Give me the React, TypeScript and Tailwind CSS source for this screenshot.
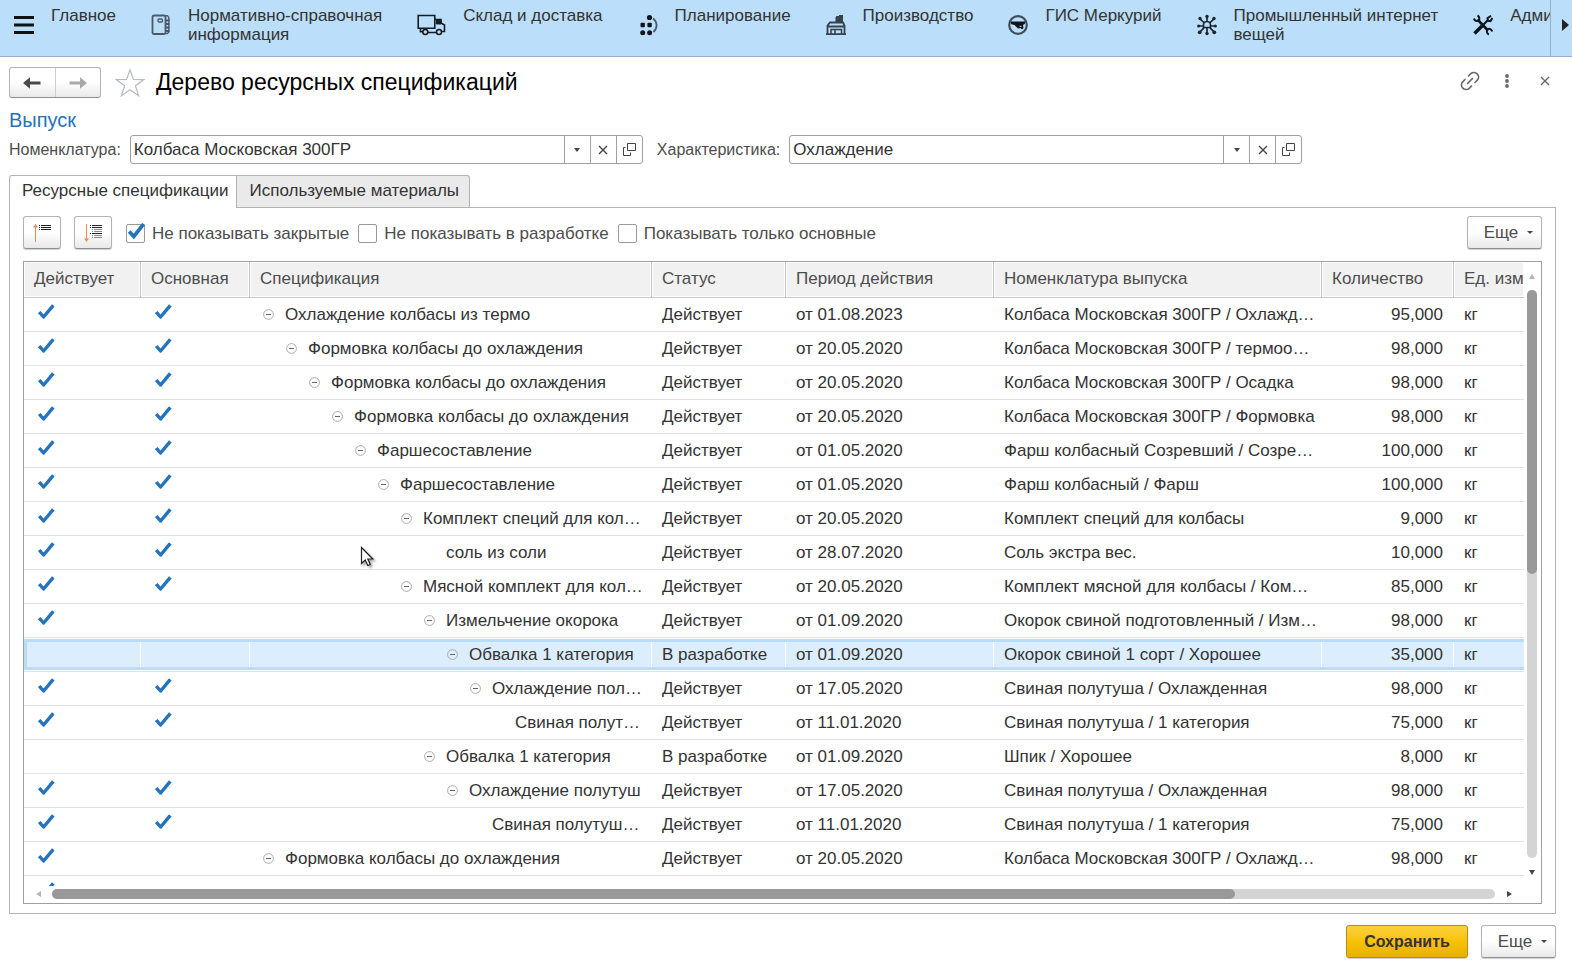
import React, { useState } from "react";

type Row = {
  active: boolean;
  main: boolean;
  level: number;
  leaf?: boolean;
  name: string;
  status: string;
  period: string;
  item: string;
  qty: string;
};

const D = "Действует";
const R = "В разработке";

const rows: Row[] = [
  { active: true, main: true, level: 0, name: "Охлаждение колбасы из термо", status: D, period: "от 01.08.2023", item: "Колбаса Московская 300ГР / Охлажд…", qty: "95,000" },
  { active: true, main: true, level: 1, name: "Формовка колбасы до охлаждения", status: D, period: "от 20.05.2020", item: "Колбаса Московская 300ГР / термоо…", qty: "98,000" },
  { active: true, main: true, level: 2, name: "Формовка колбасы до охлаждения", status: D, period: "от 20.05.2020", item: "Колбаса Московская 300ГР / Осадка", qty: "98,000" },
  { active: true, main: true, level: 3, name: "Формовка колбасы до охлаждения", status: D, period: "от 20.05.2020", item: "Колбаса Московская 300ГР / Формовка", qty: "98,000" },
  { active: true, main: true, level: 4, name: "Фаршесоставление", status: D, period: "от 01.05.2020", item: "Фарш колбасный Созревший / Созре…", qty: "100,000" },
  { active: true, main: true, level: 5, name: "Фаршесоставление", status: D, period: "от 01.05.2020", item: "Фарш колбасный / Фарш", qty: "100,000" },
  { active: true, main: true, level: 6, name: "Комплект специй для кол…", status: D, period: "от 20.05.2020", item: "Комплект специй для колбасы", qty: "9,000" },
  { active: true, main: true, level: 7, leaf: true, name: "соль из соли", status: D, period: "от 28.07.2020", item: "Соль экстра вес.", qty: "10,000" },
  { active: true, main: true, level: 6, name: "Мясной комплект для кол…", status: D, period: "от 20.05.2020", item: "Комплект мясной для колбасы / Ком…", qty: "85,000" },
  { active: true, main: false, level: 7, name: "Измельчение окорока", status: D, period: "от 01.09.2020", item: "Окорок свиной подготовленный / Изм…", qty: "98,000" },
  { active: false, main: false, level: 8, name: "Обвалка 1 категория", status: R, period: "от 01.09.2020", item: "Окорок свиной 1 сорт / Хорошее", qty: "35,000" },
  { active: true, main: true, level: 9, name: "Охлаждение пол…", status: D, period: "от 17.05.2020", item: "Свиная полутуша / Охлажденная", qty: "98,000" },
  { active: true, main: true, level: 10, leaf: true, name: "Свиная полут…", status: D, period: "от 11.01.2020", item: "Свиная полутуша / 1 категория", qty: "75,000" },
  { active: false, main: false, level: 7, name: "Обвалка 1 категория", status: R, period: "от 01.09.2020", item: "Шпик / Хорошее", qty: "8,000" },
  { active: true, main: true, level: 8, name: "Охлаждение полутуш", status: D, period: "от 17.05.2020", item: "Свиная полутуша / Охлажденная", qty: "98,000" },
  { active: true, main: true, level: 9, leaf: true, name: "Свиная полутуш…", status: D, period: "от 11.01.2020", item: "Свиная полутуша / 1 категория", qty: "75,000" },
  { active: true, main: false, level: 0, name: "Формовка колбасы до охлаждения", status: D, period: "от 20.05.2020", item: "Колбаса Московская 300ГР / Охлажд…", qty: "98,000" },
  { active: true, main: false, level: 0, leaf: true, name: "", status: "", period: "", item: "", qty: "" },
];

const columns = ["Действует", "Основная", "Спецификация", "Статус", "Период действия", "Номенклатура выпуска", "Количество", "Ед. изм"];

const MenuIcon = () => (
  <svg width="20" height="20" viewBox="0 0 20 20" fill="#111">
    <path d="M0 1h20v3H0zM0 8.500h20v3H0zM0 16h20v3H0z" />
  </svg>
);
const BookIcon = () => (
  <svg width="20" height="22" viewBox="0 0 20 22" fill="none" stroke="#4b5a69" strokeWidth="1.800">
    <rect x="1.500" y="1.500" width="13" height="18.500" rx="1.500" />
    <rect x="7" y="5" width="4.500" height="3" rx="1" strokeWidth="1.300" />
    <path d="M14.500 1.800h1.800l1.500 1.500v15l-1.500 1.300h-1.800" strokeWidth="1.400" />
    <path d="M15 6.500h3.500M15 10h3.500M15 13.500h3.500M15 17h3.500" strokeWidth="1.800" />
  </svg>
);
const TruckIcon = () => (
  <svg width="29" height="22" viewBox="0 0 29 22" fill="none" stroke="#161c22" strokeWidth="1.600">
    <path d="M1.200 1.500h16.600v12.700H1.200zM3.500 14.500v3.200h2M11 18.500h8M18 5.500h6v3.500l3.500 2v6.500H25" />
    <path d="M19.500 6h4.500v4h-4.500z" fill="#161c22" strokeWidth="1" />
    <circle cx="8.300" cy="18" r="2.500" />
    <circle cx="22" cy="18" r="2.500" />
  </svg>
);
const PlanIcon = () => (
  <svg width="20" height="22" viewBox="0 0 20 22" fill="#10161c">
    <circle cx="11.500" cy="3.500" r="2.600" />
    <rect x="2.500" y="8.800" width="4.400" height="4.400" rx="1" />
    <rect x="9.400" y="8.800" width="4.400" height="4.400" rx="1" />
    <circle cx="4.700" cy="18.700" r="2.500" />
    <circle cx="11.600" cy="18.700" r="2.500" />
    <path d="M15 4.500c4.600 3.500 4.800 9.500.5 13.500" fill="none" stroke="#4d5c6c" strokeWidth="1.800" />
  </svg>
);
const FactoryIcon = () => (
  <svg width="20" height="22" viewBox="0 0 20 22" fill="none" stroke="#36424e" strokeWidth="1.800">
    <path d="M1.500 20V11.500l2.500-3h13l1.500 3V20M1.500 12.500h17M0 20.200h20" />
    <path d="M9.500 9V3.500l1-1.500h2.500V1h4v8z" fill="#36424e" stroke="none" />
    <path d="M5 20v-4.500h4V20M9 15.500h6.500V20" strokeWidth="1.500" />
  </svg>
);
const MercuryIcon = () => (
  <svg width="20" height="22" viewBox="0 0 20 22" fill="none">
    <circle cx="10" cy="11" r="8.800" stroke="#3f4d5b" strokeWidth="2.200" />
    <path d="M2.500 7.500h15l-.8 2.500-1.700 1 .5 3-1.500 1.500-1.500-1.500-2.500.5L6.500 11l-3.300-.8z" fill="#0f151b" />
    <path d="M11.500 12.300l2 .2" stroke="#bbdefa" />
  </svg>
);
const IotIcon = () => (
  <svg width="20" height="22" viewBox="0 0 20 22" fill="none" stroke="#1d262f" strokeWidth="1.700">
    <path d="M6.500 13.500v-2.500a3.500 3.500 0 0 1 7 0v2.500zM10 7.500V3M6.800 8.500L3 4.800M13.200 8.500L17 4.800M6.500 12H2M13.500 12H18M7 13.800l-4 4M13 13.800l4 4M10 14v5" />
    <g fill="#1d262f" stroke="none">
      <circle cx="10" cy="2.500" r="1.700" /><circle cx="3" cy="4.500" r="1.700" /><circle cx="17" cy="4.500" r="1.700" />
      <circle cx="1.600" cy="12" r="1.500" /><circle cx="18.400" cy="12" r="1.500" />
      <circle cx="2.700" cy="18.300" r="1.900" /><circle cx="17.300" cy="18.300" r="1.900" /><circle cx="10" cy="19.500" r="1.700" />
    </g>
  </svg>
);
const ToolsIcon = () => (
  <svg width="20" height="22" viewBox="0 0 20 22" fill="none" stroke="#10161c">
    <path d="M1.500 19.500L9 12" strokeWidth="3.600" />
    <path d="M9 12l5.500-5.500" strokeWidth="2.200" />
    <path d="M4.500 5.500l10.500 11" strokeWidth="2.600" />
    <path d="M18 1.800l-3.500 2.500.5 2.500 2.500.3L19.500 4" strokeWidth="2" />
    <path d="M1 4.500C1.500 7 4 7.500 5.500 6.500S6.500 2.500 4.500 1.500" strokeWidth="2" />
    <path d="M19.200 17.500c-.5-2.300-3.200-3.300-4.500-2.100s-1 4.200 1.200 5.100" strokeWidth="2" />
  </svg>
);

const nav = [
  { label: ["Главное"], icon: <MenuIcon /> },
  { label: ["Нормативно-справочная", "информация"], icon: <BookIcon /> },
  { label: ["Склад и доставка"], icon: <TruckIcon /> },
  { label: ["Планирование"], icon: <PlanIcon /> },
  { label: ["Производство"], icon: <FactoryIcon /> },
  { label: ["ГИС Меркурий"], icon: <MercuryIcon /> },
  { label: ["Промышленный интернет", "вещей"], icon: <IotIcon /> },
  { label: ["Адми"], icon: <ToolsIcon /> },
];

const Tick = () => (
  <svg width="17" height="16" viewBox="0 0 17 16" fill="none" stroke="#2573bd" strokeWidth="3.400">
    <path d="M1.200 8l4.400 5L15.300 1.300" strokeLinejoin="round" />
  </svg>
);

const Cross = ({ color = "#444" }: { color?: string }) => (
  <svg width="10" height="10" viewBox="0 0 10 10" stroke={color} strokeWidth="1.400">
    <path d="M1 1l8 8M9 1L1 9" />
  </svg>
);

const Caret = () => (
  <svg width="6" height="4" viewBox="0 0 6 4" fill="#444">
    <path d="M0 0h6L3 4z" />
  </svg>
);

const softButton =
  "flex items-center justify-center rounded-[3px] border border-[#b3b3b3] border-b-[#8f8f8f] bg-linear-to-b from-white from-50% to-[#e9e9e9] shadow-[0_1px_1px_#cfcfcf]";

function Field({ id, label, value }: { id: string; label: string; value: string }) {
  const [text, setText] = useState(value);
  return (
    <div className="flex items-center gap-[9px]">
      <label htmlFor={id} className="text-[16px] whitespace-nowrap text-[#4d4d4d]">{label}</label>
      <div className="flex h-[29px] w-[513px] rounded-[3px] border border-[#a0a0a0] bg-white">
        <input
          id={id}
          value={text}
          onChange={(e) => setText(e.target.value)}
          className="min-w-0 flex-1 bg-transparent px-[3px] text-[#333] outline-none"
        />
        <button aria-label="Выбрать из списка" className="flex w-[26px] items-center justify-center border-l border-[#a0a0a0]"><Caret /></button>
        <button aria-label="Очистить" onClick={() => setText("")} className="flex w-[26px] items-center justify-center border-l border-[#a0a0a0]"><Cross /></button>
        <button aria-label="Открыть" className="flex w-[26px] items-center justify-center border-l border-[#a0a0a0]">
          <svg width="13" height="13" viewBox="0 0 13 13" fill="none" stroke="#444" strokeWidth="1">
            <path d="M4.500.5h8v7h-8zM2.500 4.500h-2v8h7v-3" />
          </svg>
        </button>
      </div>
    </div>
  );
}

function Check({ id, label, initial }: { id: string; label: string; initial: boolean }) {
  const [on, setOn] = useState(initial);
  return (
    <label htmlFor={id} className="flex items-center gap-[7px] whitespace-nowrap text-[#4d4d4d]">
      <span className="relative flex">
        <input
          id={id}
          type="checkbox"
          checked={on}
          onChange={() => setOn(!on)}
          className="size-[19px] appearance-none rounded-[2px] border border-[#999] bg-white"
        />
        {on && (
          <svg className="pointer-events-none absolute -top-px left-[2px]" width="17" height="16" viewBox="0 0 17 16" fill="none" stroke="#2573bd" strokeWidth="3.700">
            <path d="M1.200 8.500l4.600 5L15.700 1" />
          </svg>
        )}
      </span>
      {label}
    </label>
  );
}

function MoreButton() {
  return (
    <button className={`${softButton} h-[33px] w-[75px] gap-[9px] pl-2 text-[#4d4d4d]`}>
      Еще
      <svg width="6" height="3" viewBox="0 0 6 3" fill="#444"><path d="M0 0h6L3 3z" /></svg>
    </button>
  );
}

const cellBase = "flex items-center overflow-hidden whitespace-nowrap";

function Cell({ selected, first, last, className = "", children }: { selected: boolean; first?: boolean; last?: boolean; className?: string; children?: React.ReactNode }) {
  return (
    <td className="border-b border-[#e2e2e2] p-0">
      {selected ? (
        <div className={`my-px h-[31px] border-y-3 border-[#b9dcf9] bg-[#dceefd] ${first ? "border-l-3" : ""}`}>
          <div className={`${cellBase} h-[25px] pr-[10px] ${first ? "pl-[7px]" : "pl-[10px]"} ${last ? "" : "border-r border-white"} ${className}`}>{children}</div>
        </div>
      ) : (
        <div className={`${cellBase} h-[33px] pr-[11px] pl-[10px] ${className}`}>{children}</div>
      )}
    </td>
  );
}

export default function App() {
  const [selected, setSelected] = useState(10);
  return (
    <div className="flex h-screen flex-col overflow-hidden bg-white font-['Liberation_Sans',Arial,sans-serif] text-[17px] leading-[19px] text-[#333]">
      <header className="flex h-[57px] shrink-0 border-b border-[#94b2cf] bg-[#bbdefa]">
        <nav className="flex min-w-0 flex-1 gap-[35px] overflow-hidden pl-[14px]">
          {nav.map((n) => (
            <a key={n.label[0]} href="#" className="flex shrink-0 gap-[17px] whitespace-nowrap">
              <span className="flex h-[50px] items-center">{n.icon}</span>
              <span className="pt-[6px]">
                {n.label.map((l) => <span key={l} className="block">{l}</span>)}
              </span>
            </a>
          ))}
        </nav>
        <button aria-label="Прокрутить вправо" className="flex w-[22px] shrink-0 items-start justify-end border-l border-[#94b2cf] pt-[19px] pr-[3px]">
          <svg width="7" height="12" viewBox="0 0 7 12" fill="#222"><path d="M0 0l7 6-7 6z" /></svg>
        </button>
      </header>

      <main className="flex min-h-0 flex-1 flex-col pr-[16px] pb-[13px] pl-[9px]">
        <div className="mt-[10px] flex h-[31px] shrink-0 items-center">
          <div className="flex h-[31px] w-[92px] rounded-[3px] border border-[#b3b3b3] border-b-[#8f8f8f] bg-linear-to-b from-white from-50% to-[#e9e9e9]">
            <button aria-label="Назад" className="flex flex-1 items-center justify-center border-r border-[#cfcfcf]">
              <svg width="18" height="12" viewBox="0 0 18 12" fill="#4a4a4a"><path d="M0 6L7 .3V4.500h10.500v3H7v4.200z" /></svg>
            </button>
            <button aria-label="Вперед" className="flex flex-1 items-center justify-center">
              <svg width="18" height="12" viewBox="0 0 18 12" fill="#a9a9a9"><path d="M18 6L11 .3V4.500H.5v3H11v4.200z" /></svg>
            </button>
          </div>
          <button aria-label="В избранное" className="ml-[14px]">
            <svg width="30" height="30" viewBox="0 0 30 30" fill="none" stroke="#b4bcc4" strokeWidth="1.200">
              <path d="M15 1.800l3.400 9.700 10.300.100-8.300 6.200 3.200 9.900-8.600-6-8.600 6 3.200-9.900L1.300 11.600l10.300-.100z" />
            </svg>
          </button>
          <h1 className="ml-[11px] flex-1 pb-px text-[23px] leading-[30px] text-black">Дерево ресурсных спецификаций</h1>
          <div className="flex items-center pr-[6px] pb-1">
            <button aria-label="Получить ссылку">
              <svg width="20" height="20" viewBox="0 0 20 20" fill="none" stroke="#6a6a6a" strokeWidth="1.700" strokeLinecap="round">
                <path d="M8.500 5l2.300-2.300a4.600 4.600 0 0 1 6.500 6.500L15 11.500M11.500 15l-2.300 2.300a4.600 4.600 0 0 1-6.500-6.500L5 8.500M7.500 12.500l5-5" />
              </svg>
            </button>
            <button aria-label="Меню" className="ml-[24px]">
              <svg width="6" height="16" viewBox="0 0 6 16" fill="#6a6a6a"><circle cx="3" cy="3" r="1.900" /><circle cx="3" cy="8" r="1.900" /><circle cx="3" cy="13" r="1.900" /></svg>
            </button>
            <button aria-label="Закрыть" className="ml-[30px]"><Cross color="#6a6a6a" /></button>
          </div>
        </div>

        <h2 className="mt-[10px] shrink-0 text-[20px] leading-6 text-[#2573bd]">Выпуск</h2>
        <div className="mt-[3px] flex shrink-0 gap-[14px]">
          <Field id="item" label="Номенклатура:" value="Колбаса Московская 300ГР" />
          <Field id="feature" label="Характеристика:" value="Охлаждение" />
        </div>

        <div role="tablist" className="relative z-10 mt-[11px] -mb-px flex shrink-0">
          <button role="tab" aria-selected="true" className="h-[33px] rounded-tl-[3px] border border-b-0 border-[#b3b3b3] bg-white pr-[8px] pb-[3px] pl-[12px]">Ресурсные спецификации</button>
          <button role="tab" aria-selected="false" className="h-[33px] rounded-tr-[3px] border border-l-0 border-[#b3b3b3] bg-[#eaeaea] pr-[10px] pb-[2px] pl-[12px]">Используемые материалы</button>
        </div>

        <section className="flex min-h-0 flex-1 flex-col border border-[#b3b3b3] px-[13px] pt-2 pb-[9px]">
          <div className="flex shrink-0 items-center">
            <button aria-label="Свернуть" className={`${softButton} h-[33px] w-[38px]`}>
              <svg width="20" height="20" viewBox="0 0 20 20" fill="none">
                <path d="M3.500 3v16" stroke="#f08a50" /><path d="M1 4.500L3.500 1 6 4.500z" fill="#f08a50" />
                <path d="M7 2.500h1M9 2.500h10M7 4.500h1M9 4.500h10M7 6.500h1M9 6.500h10" stroke="#222" />
              </svg>
            </button>
            <button aria-label="Развернуть" className={`${softButton} ml-[13px] h-[33px] w-[38px]`}>
              <svg width="20" height="20" viewBox="0 0 20 20" fill="none">
                <path d="M3.500 1v16" stroke="#f08a50" /><path d="M1 15.500L3.500 19 6 15.500z" fill="#f08a50" />
                <path d="M7 2.500h1M9 2.500h10M7 4.500h1M9 4.500h10M7 10.500h1M9 10.500h10" stroke="#222" />
                <path d="M9 6.500h1M11 6.500h8M9 8.500h1M11 8.500h8M9 12.500h1M11 12.500h8M9 14.500h1M11 14.500h8" stroke="#8a8a8a" />
              </svg>
            </button>
            <div className="ml-[14px] flex gap-[9px] pt-px">
              <Check id="closed" label="Не показывать закрытые" initial={true} />
              <Check id="dev" label="Не показывать в разработке" initial={false} />
              <Check id="mainonly" label="Показывать только основные" initial={false} />
            </div>
            <div className="ml-auto"><MoreButton /></div>
          </div>

          <div className="mt-3 flex min-h-0 flex-1 flex-col border border-[#a0a0a0]">
            <div className="flex min-h-0 flex-1">
              <div className="min-w-0 flex-1 overflow-hidden">
                <table className="w-full table-fixed border-separate border-spacing-0">
                  <colgroup>
                    <col className="w-[117px]" /><col className="w-[109px]" /><col className="w-[402px]" /><col className="w-[134px]" />
                    <col className="w-[208px]" /><col className="w-[328px]" /><col className="w-[132px]" /><col />
                  </colgroup>
                  <thead>
                    <tr>
                      {columns.map((c, i) => (
                        <th key={c} scope="col" className={`h-[36px] overflow-hidden border-b border-[#c8c8c8] bg-[#f1f1f1] p-0 pb-[2px] pl-[10px] text-left font-normal whitespace-nowrap text-[#4d4d4d] shadow-[inset_0_0_0_1px_#fff] ${i < 7 ? "border-r" : ""}`}>{c}</th>
                      ))}
                    </tr>
                  </thead>
                  <tbody>
                    {rows.map((r, i) => {
                      const s = i === selected;
                      return (
                        <tr key={i} onClick={() => setSelected(i)} aria-selected={s}>
                          <Cell selected={s} first>{r.active && <span className="mb-[5px] ml-[4px]"><Tick /></span>}</Cell>
                          <Cell selected={s}>{r.main && <span className="mb-[5px] ml-[4px]"><Tick /></span>}</Cell>
                          <Cell selected={s}>
                            <span className="flex items-center" style={{ paddingLeft: r.level * 23 + 3 }}>
                              <span className="flex w-[22px]">
                                {!r.leaf && (
                                  <svg width="11" height="11" viewBox="0 0 11 11" fill="none"><circle cx="5.500" cy="5.500" r="4.900" stroke="#aaa" /><path d="M3 5.500h5" stroke="#666" /></svg>
                                )}
                              </span>
                              {r.name}
                            </span>
                          </Cell>
                          <Cell selected={s}>{r.status}</Cell>
                          <Cell selected={s}>{r.period}</Cell>
                          <Cell selected={s}>{r.item}</Cell>
                          <Cell selected={s} className="justify-end">{r.qty}</Cell>
                          <Cell selected={s} last>{r.qty && "кг"}</Cell>
                        </tr>
                      );
                    })}
                  </tbody>
                </table>
              </div>
              <div className="flex w-[17px] shrink-0 flex-col items-center pt-3 pr-[2px] pb-[11px]">
                <svg width="6" height="5" viewBox="0 0 6 5" fill="#b5b5b5"><path d="M0 5h6L3 0z" /></svg>
                <div className="mt-[11px] mb-3 w-[10px] flex-1 rounded-full bg-[#d4d4d4]">
                  <div className="h-1/2 w-full rounded-full bg-[#999]" />
                </div>
                <svg width="6" height="5" viewBox="0 0 6 5" fill="#444"><path d="M0 0h6L3 5z" /></svg>
              </div>
            </div>
            <div className="flex h-[17px] shrink-0 items-center pr-[29px] pb-[1px] pl-3">
              <svg width="5" height="6" viewBox="0 0 5 6" fill="#b5b5b5"><path d="M5 0v6L0 3z" /></svg>
              <div className="mr-3 ml-[11px] h-[10px] flex-1 rounded-full bg-[#d4d4d4]">
                <div className="h-full w-[82%] rounded-full bg-[#999]" />
              </div>
              <svg width="5" height="6" viewBox="0 0 5 6" fill="#444"><path d="M0 0v6l5-3z" /></svg>
            </div>
          </div>
        </section>

        <div className="mt-[11px] flex shrink-0 justify-end gap-[13px]">
          <button className="h-[33px] w-[122px] rounded-[3px] border border-[#b38f10] bg-linear-to-b from-[#fbd03a] via-[#f8c200] to-[#e8b000] text-[16px] font-bold shadow-[0_1px_1px_#cfcfcf]">Сохранить</button>
          <MoreButton />
        </div>
      </main>

      <svg className="pointer-events-none absolute top-[546px] left-[360px] drop-shadow-[2px_2px_1px_#0005]" width="14" height="21" viewBox="0 0 14 21" fill="#fff" stroke="#222" strokeWidth="1.200">
        <path d="M1.500 1.500v16l3.700-3.500 2.600 5.500 2.500-1-2.500-5.500h5z" />
      </svg>
    </div>
  );
}
